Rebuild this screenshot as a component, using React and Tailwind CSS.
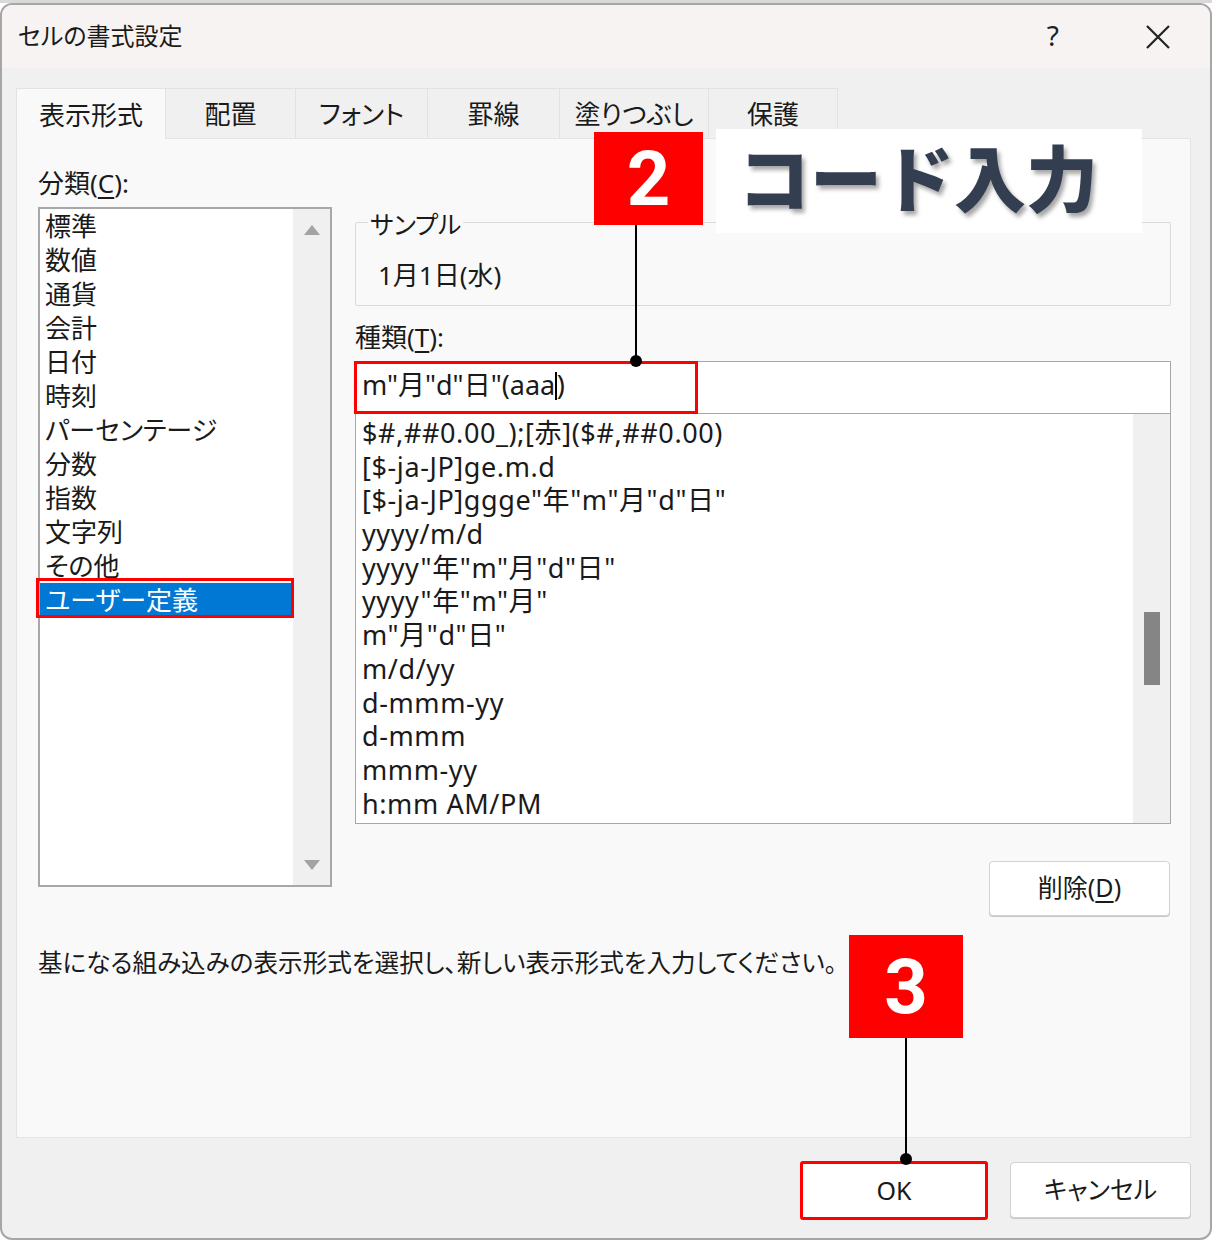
import React from 'react';

const FONT = { fontFamily: '"Noto Sans", "Noto Sans CJK JP", sans-serif' };

const categories = ['標準', '数値', '通貨', '会計', '日付', '時刻', 'パーセンテージ', '分数', '指数', '文字列', 'その他', 'ユーザー定義'];

const formats = [
  '$#,##0.00_);[赤]($#,##0.00)',
  '[$-ja-JP]ge.m.d',
  '[$-ja-JP]ggge"年"m"月"d"日"',
  'yyyy/m/d',
  'yyyy"年"m"月"d"日"',
  'yyyy"年"m"月"',
  'm"月"d"日"',
  'm/d/yy',
  'd-mmm-yy',
  'd-mmm',
  'mmm-yy',
  'h:mm AM/PM',
];

const tabs = [
  { label: '表示形式', w: 'w-[150px]', active: true },
  { label: '配置', w: 'w-[130px]' },
  { label: 'フォント', w: 'w-[132px]' },
  { label: '罫線', w: 'w-[132px]' },
  { label: '塗りつぶし', w: 'w-[149px]' },
  { label: '保護', w: 'w-[129px]' },
];

const Triangle = ({ up }) => (
  <svg width="18" height="12" viewBox="0 0 18 12">
    <path d={up ? 'M1 11 L9 1 L17 11 Z' : 'M1 1 L9 11 L17 1 Z'} fill="#a3a3a3" />
  </svg>
);

const App = () => {
  return (
    <div className="relative w-[1212px] h-[1240px] bg-white overflow-hidden text-[#1a1a1a] [font-feature-settings:'palt']" style={FONT}>
      {/* strip of the sheet behind the dialog */}
      <div className="h-[3px] bg-[#d9d9d9]" />

      <div className="h-[1237px] border-2 border-[#a6a6a6] rounded-[12px] bg-[#f0f0f0] overflow-hidden flex flex-col">
        {/* title bar */}
        <div className="h-[63px] bg-[#f7f3f3] flex items-center pl-[16px] pr-[39px]">
          <span className="text-[24px] pb-[2px]">セルの書式設定</span>
          <span className="ml-auto text-[28px] text-[#222] mr-[86px] pb-[4px]">?</span>
          <svg width="26" height="26" viewBox="0 0 26 26">
            <path d="M2 2 L24 24 M24 2 L2 24" stroke="#222" strokeWidth="2.2" />
          </svg>
        </div>

        <div className="px-[14px] pt-[20px] flex flex-col">
          {/* tabs */}
          <div className="flex h-[50px] items-end">
            {tabs.map((t) => (
              <div
                key={t.label}
                className={
                  t.active
                    ? `${t.w} h-[51px] bg-[#f9f9f9] border border-b-0 border-[#e2e2e2] flex items-center justify-center pt-[2px] text-[26px] relative z-10 -mb-px`
                    : `${t.w} h-[50px] bg-[#f0f0f0] border border-l-0 border-b-0 border-[#e2e2e2] flex items-center justify-center pt-[2px] text-[26px]`
                }
              >
                {t.label}
              </div>
            ))}
          </div>

          {/* panel */}
          <div className="h-[1000px] w-[1175px] bg-[#f9f9f9] border border-[#e4e4e4] pl-[21px] pt-[29px]">
            <div className="flex gap-[23px]">
              {/* left column */}
              <div className="w-[294px] flex flex-col">
                <div className="h-[30px] leading-[30px] text-[26px]">分類(<span className="underline underline-offset-4">C</span>):</div>
                <div className="mt-[9px] h-[680px] bg-white border-2 border-[#a8a8a8] flex">
                  <div className="flex-1 flex flex-col">
                    {categories.map((c, i) =>
                      i === categories.length - 1 ? (
                        <div key={c} className="h-[34px] leading-[34px] text-[26px] bg-[#0078d4] text-white pl-[5px]">{c}</div>
                      ) : (
                        <div key={c} className="h-[34px] leading-[34px] text-[26px] pl-[5px]">{c}</div>
                      )
                    )}
                  </div>
                  <div className="w-[37px] bg-[#f0f0f0] flex flex-col items-center justify-between pt-[15px] pb-[14px]">
                    <Triangle up />
                    <Triangle />
                  </div>
                </div>
              </div>

              {/* right column */}
              <div className="w-[816px] flex flex-col">
                <div className="relative mt-[54px] h-[84px] border border-[#dadada] rounded-[2px]">
                  <span className="absolute left-[12px] -top-[15px] px-[2px] bg-[#f9f9f9] text-[25px] leading-[32px]">サンプル</span>
                  <div className="pt-[36px] pl-[22px] text-[26px] leading-[32px]">1月1日(水)</div>
                </div>
                <div className="mt-[16px] h-[30px] leading-[30px] text-[26px]">種類(<span className="underline underline-offset-4">T</span>):</div>
                <div className="mt-[9px] h-[52px] bg-white border border-[#a8a8a8] border-b-0 flex items-center pl-[6px] pb-[4px] text-[27px]">
                  <span>m"月"d"日"(aaa</span>
                  <span className="w-[1.5px] h-[28px] bg-black" />
                  <span>)</span>
                </div>
                <div className="h-[411px] bg-white border border-[#a8a8a8] flex">
                  <div className="flex-1 pt-[2px] pl-[6px] flex flex-col">
                    {formats.map((f) => (
                      <div key={f} className="h-[33.7px] leading-[33.7px] text-[27px] tracking-[0.6px] whitespace-nowrap">{f}</div>
                    ))}
                  </div>
                  <div className="w-[37px] bg-[#f0f0f0] flex justify-center pt-[198px]">
                    <div className="w-[16px] h-[73px] bg-[#858585]" />
                  </div>
                </div>
                <div className="mt-[37px] flex justify-end pr-[1px]">
                  <div className="w-[181px] h-[55px] bg-white border border-[#d2d2d2] rounded-[4px] flex items-center justify-center pb-[2px] text-[25px] shadow-[0_1px_0_#c8c8c8]">
                    削除(<span className="underline underline-offset-4">D</span>)
                  </div>
                </div>
              </div>
            </div>

            <div className="mt-[31px] text-[24.6px] leading-[32px]">
              基になる組み込みの表示形式を選択し、新しい表示形式を入力してください。
            </div>
          </div>

          {/* footer buttons */}
          <div className="flex justify-end gap-[22px] pt-[23px] pr-[5px]">
            <div className="w-[188px] h-[59px] bg-white border-[3px] border-[#ff0000] rounded-[3px] flex items-center justify-center text-[25px]">OK</div>
            <div className="w-[181px] h-[56px] mt-[1px] bg-white border border-[#d2d2d2] rounded-[4px] flex items-center justify-center text-[25px] shadow-[0_1px_0_#c8c8c8]">キャンセル</div>
          </div>
        </div>
      </div>

      {/* annotations */}
      <div className="absolute left-[36px] top-[578px] w-[258px] h-[40px] border-[3px] border-[#ff0000]" />
      <div className="absolute left-[354px] top-[361px] w-[344px] h-[53px] border-[3px] border-[#ff0000]" />

      <div className="absolute left-[594px] top-[132px] w-[109px] h-[93px] bg-[#ff0000] flex items-center justify-center text-white text-[76px] font-bold leading-none" style={{ fontFamily: 'Roboto, sans-serif' }}>2</div>
      <div className="absolute left-[716px] top-[129px] w-[426px] h-[104px] bg-white flex items-center pl-[22px] pb-[12px] text-[#333f50] text-[72px] font-black leading-none [text-shadow:3px_4px_4px_rgba(0,0,0,0.35)] [font-feature-settings:normal]" style={{ fontFamily: '"Noto Sans CJK JP", sans-serif' }}>コード入力</div>
      <div className="absolute left-[635px] top-[225px] w-[1.5px] h-[136px] bg-black" />
      <div className="absolute left-[630px] top-[355px] w-[12px] h-[12px] rounded-full bg-black" />

      <div className="absolute left-[849px] top-[935px] w-[114px] h-[103px] bg-[#ff0000] flex items-center justify-center text-white text-[76px] font-bold leading-none" style={{ fontFamily: 'Roboto, sans-serif' }}>3</div>
      <div className="absolute left-[905px] top-[1038px] w-[1.5px] h-[121px] bg-black" />
      <div className="absolute left-[900px] top-[1153px] w-[12px] h-[12px] rounded-full bg-black" />
    </div>
  );
};

export default App;
